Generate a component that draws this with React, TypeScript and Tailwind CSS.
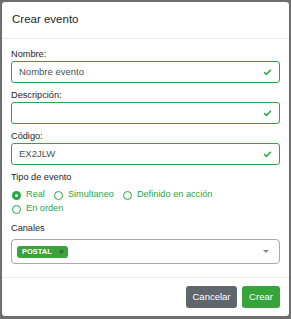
import { Check } from 'lucide-react';

const FIELDS = [
  { label: 'Nombre:', value: 'Nombre evento' },
  { label: 'Descripción:', value: '' },
  { label: 'Código:', value: 'EX2JLW' },
];

function ValidInput({ label, value }: { label: string; value: string }) {
  return (
    <div className="flex flex-col">
      <label className="h-[13px] text-[9.2px] leading-[13px] text-[#212529]">{label}</label>
      <div className="flex h-[22px] items-center justify-between rounded-[3px] border border-[#28a745] px-[7px]">
        <span className="text-[9.5px] text-[#495057]">{value}</span>
        <Check className="h-[9px] w-[9px] text-[#28a745]" strokeWidth={4} />
      </div>
    </div>
  );
}

function Radio({ label, checked }: { label: string; checked?: boolean }) {
  return (
    <div className="flex h-[14px] items-center gap-[5px]">
      <span
        className={
          checked
            ? 'flex h-[9px] w-[9px] items-center justify-center rounded-full bg-[#28a745]'
            : 'h-[9px] w-[9px] rounded-full border border-[#28a745]'
        }
      >
        {checked && <span className="h-[3px] w-[3px] rounded-full bg-white" />}
      </span>
      <span className="text-[9.2px] text-[#28a745]">{label}</span>
    </div>
  );
}

export default function App() {
  return (
    <div
      className="h-[319px] w-[291px] bg-[#6e6e6e] px-[2px] pt-[2px]"
      style={{ fontFamily: '"Liberation Sans", Arial, sans-serif' }}
    >
      <div className="flex h-[314px] flex-col rounded-[3px] bg-white">
        <div className="flex h-[37px] items-center border-b border-[#e9ecef] px-[10px]">
          <h5 className="text-[11.5px] text-[#212529]">Crear evento</h5>
        </div>

        <div className="flex flex-col px-[9px] pt-[9px]">
          <div className="flex flex-col gap-[6px]">
            {FIELDS.map((f) => (
              <ValidInput key={f.label} label={f.label} value={f.value} />
            ))}
          </div>

          <div className="mt-[6px] h-[13px] text-[9.2px] leading-[13px] text-[#212529]">Tipo de evento</div>
          <div className="mt-[4px] flex flex-col pl-[1px]">
            <div className="flex gap-x-[9px]">
              <Radio label="Real" checked />
              <Radio label="Simultaneo" />
              <Radio label="Definido en acción" />
            </div>
            <Radio label="En orden" />
          </div>

          <div className="mt-[6px] h-[13px] text-[9.2px] leading-[13px] text-[#212529]">Canales</div>
          <div className="mt-[4px] flex h-[25px] items-center justify-between rounded-[4px] border border-[#aaaaaa] pl-[5px] pr-[10px]">
            <span className="flex h-[12px] items-center gap-[7px] rounded-[3px] bg-[#3ba33b] pl-[5px] pr-[4px] text-[7.5px] font-bold text-white">
              POSTAL
              <span className="text-[8px] font-bold text-[#1e5a2a]">×</span>
            </span>
            <span className="h-0 w-0 border-x-[3px] border-t-[3px] border-x-transparent border-t-[#888888]" />
          </div>
        </div>

        <div className="mt-[13px] flex flex-1 items-center justify-end gap-[5px] border-t border-[#e9ecef] px-[9px]">
          <button className="h-[22px] w-[51px] rounded-[3px] bg-[#5f666d] text-[9.5px] text-white">Cancelar</button>
          <button className="h-[22px] w-[38px] rounded-[3px] bg-[#35a53a] text-[9.5px] text-white">Crear</button>
        </div>
      </div>
    </div>
  );
}
